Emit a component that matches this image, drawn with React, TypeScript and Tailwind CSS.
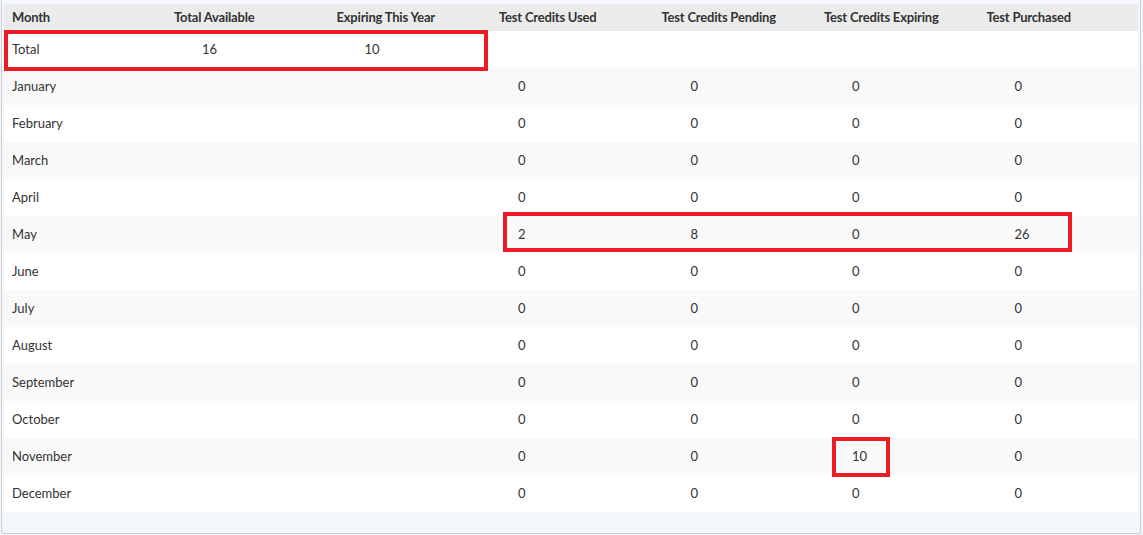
const months = ["January","February","March","April","May","June","July","August","September","October","November","December"];
const data: Record<string, string[]> = { May: ["2","8","0","26"], November: ["0","0","10","0"] };

export default function App() {
  return (
    <div className="w-[1143px] h-[535px] bg-[#f4f7fb] relative" style={{ fontFamily: "Lato, 'Noto Sans', sans-serif" }}>
      <div className="absolute left-[1px] top-0 w-[1140px] h-[534px] border-x border-b border-[#c9ccd0] rounded-b-[3px] pt-[4px] px-[2px] bg-[#f4f7fb]">
        <div className="grid grid-cols-[162px_repeat(6,162.5px)] h-[27px] bg-[#ebebeb] items-center text-[13px] font-bold text-[#333] tracking-[-0.2px]">
          <div className="pl-2">Month</div>
          {["Total Available","Expiring This Year","Test Credits Used","Test Credits Pending","Test Credits Expiring","Test Purchased"].map(h => <div key={h} className="pl-2">{h}</div>)}
        </div>
        <div className="grid grid-cols-[162px_repeat(6,162.5px)] h-[37px] bg-white items-center text-[13px] text-[#333]">
          <div className="pl-2">Total</div>
          <div className="pl-[36px]">16</div>
          <div className="pl-[36px]">10</div>
          <div /><div /><div /><div />
        </div>
        {months.map((m, i) => {
          const v = data[m] ?? ["0","0","0","0"];
          return (
            <div key={m} className={`grid grid-cols-[162px_repeat(6,162.5px)] h-[37px] items-center text-[13px] text-[#333] ${i % 2 === 0 ? "bg-[#f9f9f9]" : "bg-white"}`}>
              <div className="pl-2">{m}</div>
              <div /><div />
              <div className="pl-[27px]">{v[0]}</div>
              <div className="pl-[37px]">{v[1]}</div>
              <div className="pl-[36px]">{v[2]}</div>
              <div className="pl-[36px]">{v[3]}</div>
            </div>
          );
        })}
      </div>
      <div className="absolute left-[4px] top-[30px] w-[484px] h-[41px] border-[4px] border-[#ed1c24]" />
      <div className="absolute left-[503px] top-[212px] w-[569px] h-[40px] border-[4px] border-[#ed1c24]" />
      <div className="absolute left-[832px] top-[437px] w-[58px] h-[40px] border-[4px] border-[#ed1c24]" />
    </div>
  );
}
